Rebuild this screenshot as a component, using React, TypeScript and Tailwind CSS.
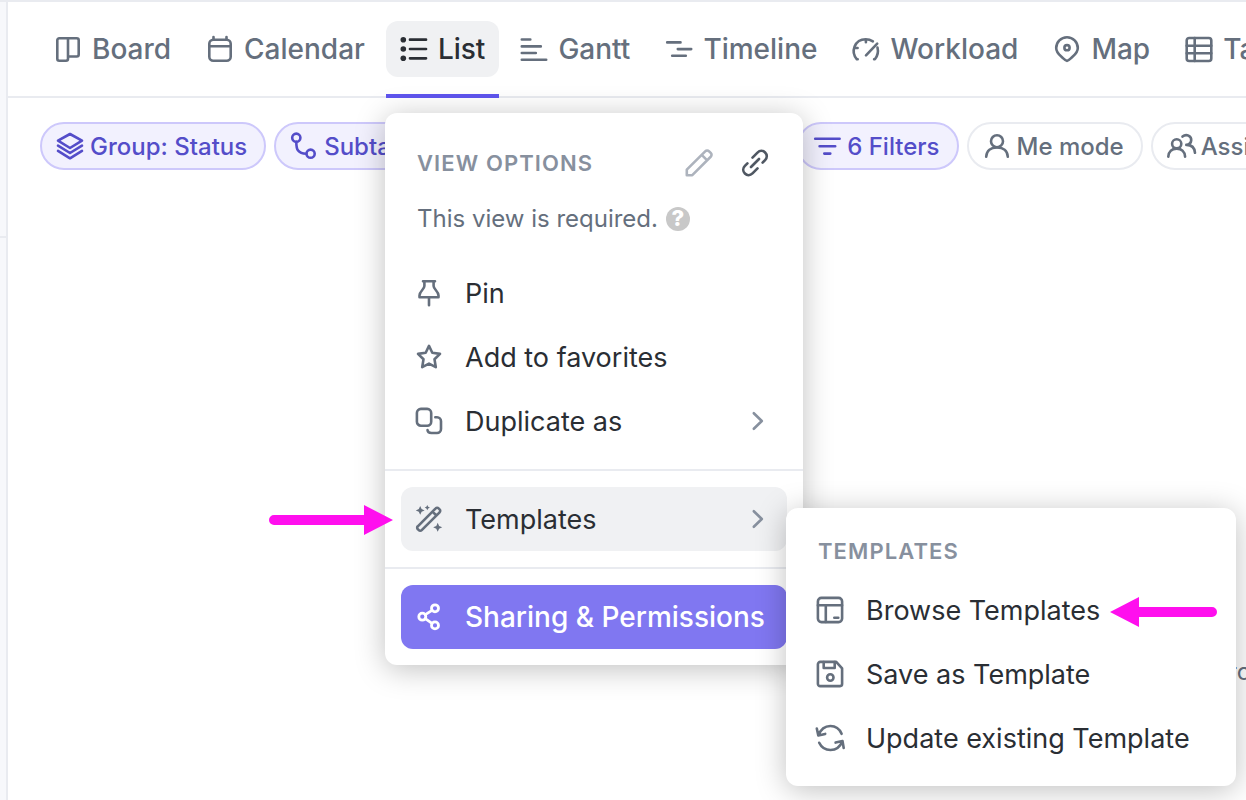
import type { ReactNode } from "react";

type IconProps = { children: ReactNode; width?: number };

const Icon = ({ children, width = 2.6 }: IconProps) => (
  <svg
    viewBox="0 0 28 28"
    className="size-7 shrink-0 overflow-visible"
    fill="none"
    stroke="currentColor"
    strokeWidth={width}
    strokeLinecap="round"
    strokeLinejoin="round"
    aria-hidden="true"
  >
    {children}
  </svg>
);

const BoardIcon = () => (
  <Icon>
    <path d="M14 3.5v18M5.3 3.3h17.4a2 2 0 0 1 2 2v14.2a2 2 0 0 1-2 2H14v2.3a2 2 0 0 1-2 2H5.3a2 2 0 0 1-2-2V5.3a2 2 0 0 1 2-2Z" />
  </Icon>
);

const CalendarIcon = () => (
  <Icon>
    <rect x="3.3" y="4.8" width="21.4" height="21" rx="4" />
    <path d="M3.3 11.3h21.4M7.5 2v2.4M20.5 2v2.4" />
  </Icon>
);

const ListIcon = () => (
  <Icon width={2.7}>
    <path d="M10 4.7h16M10 14h16M10 23.3h16" />
    <g fill="currentColor" stroke="none">
      <circle cx="3.3" cy="4.7" r="2.8" />
      <circle cx="3.3" cy="14" r="2.8" />
      <circle cx="3.3" cy="23.3" r="2.8" />
    </g>
  </Icon>
);

const GanttIcon = () => (
  <Icon>
    <path d="M1.8 4.5h8.5M1.8 11.4h19M1.8 18h14M1.8 24.7h24.4" />
  </Icon>
);

const TimelineIcon = () => (
  <Icon>
    <path d="M2.2 7.4h13.3M12.8 14.1h13.4M7.2 20.7h13.6" />
  </Icon>
);

const WorkloadIcon = () => (
  <Icon>
    <path d="M5.7 24.3H4.9C1.6 20.6 1 15.6 2.6 11.5 4.6 6.6 9 4.2 13.7 4.2c2.8 0 5 .7 7.2 2.1M25.5 12.5c1 4.200.2 8.300-2.600 11.800h-.8M13.900 4.500v2.700M2.800 13h2.800M14 20.300 25.200 8.700" />
  </Icon>
);

const MapIcon = () => (
  <Icon>
    <path d="M14 25.9c-1.5 0-3-1.9-5.5-4.1C5.2 19 3.2 16.5 3.2 13a10.8 10.8 0 0 1 21.6 0c0 3.5-2 6-5.3 8.8-2.5 2.2-4 4.1-5.5 4.1Z" />
    <circle cx="14" cy="12.7" r="2.6" />
  </Icon>
);

const TableIcon = () => (
  <Icon>
    <rect x="1.7" y="3" width="24.6" height="23" rx="2.5" />
    <path d="M1.7 10.7h24.6M1.7 18.3h24.6M9.7 3v23" />
  </Icon>
);

const LayersIcon = () => (
  <Icon>
    <path d="M14 2 26 8.7 14 16 2 8.7ZM2 13.7 14 21l12-7.300M2 18.900 14 26.300l12-7.400" />
  </Icon>
);

const SubtaskIcon = () => (
  <Icon>
    <circle cx="6.3" cy="5.7" r="4.1" />
    <circle cx="20.6" cy="21.7" r="4.1" />
    <path d="M6.3 9.9c0 7.5 1.5 11.8 10 11.8" />
  </Icon>
);

const FilterIcon = () => (
  <Icon>
    <path d="M2.2 6.7h24.4M6.6 14.3h15.6M11.3 21.6h6" />
  </Icon>
);

const PersonIcon = () => (
  <Icon>
    <circle cx="14" cy="9.2" r="6" />
    <path d="M3.2 24.7c.3-6 4.8-9.3 10.8-9.3s10.5 3.3 10.8 9.3" />
  </Icon>
);

const PeopleIcon = () => (
  <Icon>
    <circle cx="9.7" cy="11.8" r="4.6" />
    <path d="M1.3 24.6c.3-5.2 3.7-8 8.4-8s8.1 2.8 8.4 8M15.5 4.6c3.8-3.3 9.2-.6 8.7 3.9-.3 2.5-2.2 4.3-4.9 4.4 5.3-.1 8.3 3 8.7 7.900" />
  </Icon>
);

const PencilIcon = () => (
  <Icon>
    <path d="M1.8 26.2v-5.5L20.2 2.3a2.7 2.7 0 0 1 3.9 0l1.6 1.6a2.7 2.7 0 0 1 0 3.9L7.3 26.2ZM16.7 5.8l5.5 5.5" />
  </Icon>
);

const LinkIcon = () => (
  <Icon>
    <path d="m10 18 8-8M11.5 8.6l5-5c2.5-2.5 5.5-2.2 7.6-.1s2.4 5.200 0 7.600l-2.500 2.500M16.500 19.400l-5 5c-2.500 2.500-5.500 2.200-7.600.1s-2.400-5.200 0-7.600l2.500-2.500" />
  </Icon>
);

const PinIcon = () => (
  <Icon>
    <path d="M8 2.2h12M9.4 2.5v4.6c0 3.2-4.9 5-4.900 9.500v1.700h19v-1.700c0-4.500-4.900-6.300-4.900-9.500V2.500M14 18.500v7.800" />
  </Icon>
);

const StarIcon = () => (
  <Icon>
    <path d="m14 2.9 3.3 6.8 7.7 1.2-5.5 5.4 1.3 7.9-6.8-3.600-6.800 3.600 1.300-7.900L3 10.900l7.700-1.200Z" />
  </Icon>
);

const DuplicateIcon = () => (
  <Icon>
    <rect x="1.9" y="1.9" width="14.3" height="16.8" rx="4" />
    <path d="M20.3 10.3h1.7a4 4 0 0 1 4 4V22a4 4 0 0 1-4 4h-5.5c-2.6 0-3.9-1.3-4-3" />
  </Icon>
);

const WandIcon = () => (
  <Icon>
    <path d="M2.8 21.3 20.7 3.4a2 2 0 0 1 2.9 0l1 1a2 2 0 0 1 0 2.9L6.7 25.2a2 2 0 0 1-2.9 0l-1-1a2 2 0 0 1 0-2.9ZM17.5 6.6l3.9 3.9" />
    <path
      fill="currentColor"
      stroke="none"
      d="m5.200 1 1.400 3 3 1.400-3 1.400-1.400 3-1.400-3-3-1.400 3-1.400ZM12.300 0l.9 1.700 1.700.9-1.700.9-.9 1.700-.9-1.700-1.700-.9 1.700-.9ZM22.700 17.800l1.400 3.100 3.100 1.400-3.100 1.400-1.400 3.100-1.400-3.100-3.100-1.400 3.100-1.400Z"
    />
  </Icon>
);

const ShareIcon = () => (
  <Icon width={2.8}>
    <circle cx="7.3" cy="13.7" r="3.5" />
    <circle cx="20" cy="5.3" r="3.5" />
    <circle cx="20" cy="22.4" r="3.5" />
    <path d="m10.3 11.7 6.7-4.4M10.3 15.7l6.7 4.6" />
  </Icon>
);

const BrowseIcon = () => (
  <Icon>
    <rect x="1.9" y="1.9" width="24.2" height="24.2" rx="3.5" />
    <path d="M1.9 9.3h24.2M9.8 9.5v16.5M18.3 21.8h4" />
  </Icon>
);

const SaveIcon = () => (
  <Icon>
    <path d="M4.3 1.9h15.9l5.9 6.5v15.7a2 2 0 0 1-2 2H4.3a2.4 2.4 0 0 1-2.4-2V4.3a2.4 2.4 0 0 1 2.4-2.4Z" />
    <path d="M7.7 2v6h11V2" />
    <circle cx="14.3" cy="17.5" r="3.2" />
  </Icon>
);

const UpdateIcon = () => (
  <Icon>
    <path d="M.8 4.5 2.3 11.5l6.900-1.600M2.300 11.500C4.900 4.800 8.800 2 14.400 2c5.200 0 9 2.600 11.200 7.800M27.700 24 26.500 17l-6.900 1.600M26.500 17c-2.600 6.500-6.500 9-12 9-5.200 0-9-2.300-11.300-7.200" />
  </Icon>
);

const Chevron = () => (
  <span className="ml-auto text-[#87909e]">
    <Icon>
      <path d="m8.8 6.2 8 7.8-8 7.8" />
    </Icon>
  </span>
);

const tabs = [
  { name: "Board", icon: BoardIcon },
  { name: "Calendar", icon: CalendarIcon },
  { name: "List", icon: ListIcon, current: true },
  { name: "Gantt", icon: GanttIcon },
  { name: "Timeline", icon: TimelineIcon },
  { name: "Workload", icon: WorkloadIcon },
  { name: "Map", icon: MapIcon },
  { name: "Table", icon: TableIcon },
];

const chips = [
  { name: "Group: Status", icon: LayersIcon, active: true },
  { name: "Subtasks", icon: SubtaskIcon, active: true, wide: true },
  { name: "6 Filters", icon: FilterIcon, active: true },
  { name: "Me mode", icon: PersonIcon },
  { name: "Assignees", icon: PeopleIcon },
];

const viewActions = [
  { name: "Pin", icon: PinIcon },
  { name: "Add to favorites", icon: StarIcon },
  { name: "Duplicate as", icon: DuplicateIcon, submenu: true },
];

const templateActions = [
  { name: "Browse Templates", icon: BrowseIcon },
  { name: "Save as Template", icon: SaveIcon },
  { name: "Update existing Template", icon: UpdateIcon },
];

type MenuItemProps = {
  name: string;
  icon: () => ReactNode;
  submenu?: boolean;
  highlighted?: boolean;
};

const MenuItem = ({ name, icon: ItemIcon, submenu, highlighted }: MenuItemProps) => (
  <button
    type="button"
    className={`flex h-16 w-full items-center gap-[22px] rounded-xl px-3.5 text-left text-[27px] leading-[43px] whitespace-nowrap text-[#2a2e34] ${
      highlighted ? "bg-[#f0f1f3]" : ""
    }`}
  >
    <span className="text-[#656f7d]">
      <ItemIcon />
    </span>
    {name}
    {submenu && <Chevron />}
  </button>
);

const ViewTabs = () => (
  <nav className="flex h-24 shrink-0 gap-[7px] border-b-2 border-[#e9ebf0] pl-8">
    {tabs.map((tab) => (
      <div
        key={tab.name}
        className={`-mb-0.5 flex shrink-0 flex-col pt-[19px] ${
          tab.current ? "border-b-4 border-[#5f55ee]" : ""
        }`}
      >
        <a
          href="#"
          className={`flex h-14 items-center gap-2.5 rounded-xl px-3.5 text-[28px] leading-[42px] font-medium ${
            tab.current ? "bg-[#f0f1f3] text-[#2a2e34]" : "text-[#656f7d]"
          }`}
        >
          <tab.icon />
          {tab.name}
        </a>
      </div>
    ))}
  </nav>
);

const FilterBar = () => (
  <div className="flex gap-2 pt-6 pl-8">
    {chips.map((chip) => (
      <button
        key={chip.name}
        type="button"
        className={`flex h-12 shrink-0 items-center gap-1.5 rounded-full border-2 pr-[17px] pl-3.5 text-2xl leading-[35px] font-medium ${
          chip.active
            ? "border-[#cdc8fb] bg-[#f2f1fe] text-[#544dc9]"
            : "border-[#e9ebf0] bg-white text-[#656f7d]"
        } ${chip.wide ? "w-[515px]" : ""}`}
      >
        <chip.icon />
        {chip.name}
      </button>
    ))}
  </div>
);

const ViewOptionsMenu = () => (
  <div className="absolute top-[113px] left-[385px] w-[418px] rounded-xl bg-white shadow-[0_4px_30px_rgba(0,0,0,0.25)]">
    <div className="pt-[22px] pr-[34px] pb-3.5 pl-8">
      <div className="flex h-14 items-center">
        <h2 className="mr-auto text-[22px] font-semibold tracking-wider text-[#87909e]">
          VIEW OPTIONS
        </h2>
        <button type="button" aria-label="Rename view" className="text-[#adb3bd]">
          <PencilIcon />
        </button>
        <button type="button" aria-label="Copy link" className="ml-7 text-[#4f5762]">
          <LinkIcon />
        </button>
      </div>
      <p className="flex h-14 items-center gap-2 text-2xl text-[#656f7d]">
        This view is required.
        <span className="flex size-6 items-center justify-center rounded-full bg-[#c8c8c8] text-[22px] font-extrabold text-white">
          ?
        </span>
      </p>
    </div>
    <div className="px-4 pb-4">
      {viewActions.map((action) => (
        <MenuItem key={action.name} {...action} />
      ))}
    </div>
    <div className="border-y-2 border-[#e9ebf0] p-4">
      <MenuItem name="Templates" icon={WandIcon} submenu highlighted />
    </div>
    <div className="p-4">
      <button
        type="button"
        className="flex h-16 w-full items-center gap-[22px] rounded-xl bg-[#8077f1] px-3.5 text-[28px] leading-[42px] font-medium whitespace-nowrap text-white"
      >
        <ShareIcon />
        Sharing &amp; Permissions
      </button>
    </div>
  </div>
);

const TemplatesMenu = () => (
  <div className="absolute top-[508px] left-[786px] w-[450px] rounded-xl bg-white p-4 shadow-[0_4px_30px_rgba(0,0,0,0.25)]">
    <h2 className="flex h-[54px] items-center px-4 text-[22px] font-semibold tracking-wider text-[#87909e]">
      TEMPLATES
    </h2>
    {templateActions.map((action) => (
      <MenuItem key={action.name} {...action} />
    ))}
  </div>
);

const Arrow = ({ className, length }: { className: string; length: number }) => (
  <svg
    viewBox={`0 0 ${length} 30`}
    width={length}
    height="30"
    className={`absolute ${className}`}
    fill="#ff0fee"
    aria-hidden="true"
  >
    <path d={`M5 10H${length - 29}V0L${length} 15 ${length - 29} 30V20H5A5 5 0 0 1 5 10Z`} />
  </svg>
);

export default function App() {
  return (
    <div className="relative flex min-h-screen overflow-hidden border-t-2 border-[#e9ebf0] bg-white font-['Inter',sans-serif]">
      <aside className="w-2 shrink-0 border-r-2 border-[#e9ebf0] bg-[#f7f8fb]">
        <div className="h-[236px] border-b-2 border-[#e9ebf0]" />
      </aside>
      <main className="flex min-w-0 flex-1 flex-col overflow-hidden">
        <ViewTabs />
        <FilterBar />
        <p className="mt-auto flex h-64 justify-end text-2xl text-[#656f7d]">
          <span className="w-[18px] pt-28">ro</span>
        </p>
      </main>
      <div className="absolute -top-0.5 left-0">
        <ViewOptionsMenu />
        <TemplatesMenu />
        <Arrow className="top-[505px] left-[269px]" length={124} />
        <Arrow className="top-[597px] left-[1110px] rotate-180" length={107} />
      </div>
    </div>
  );
}
